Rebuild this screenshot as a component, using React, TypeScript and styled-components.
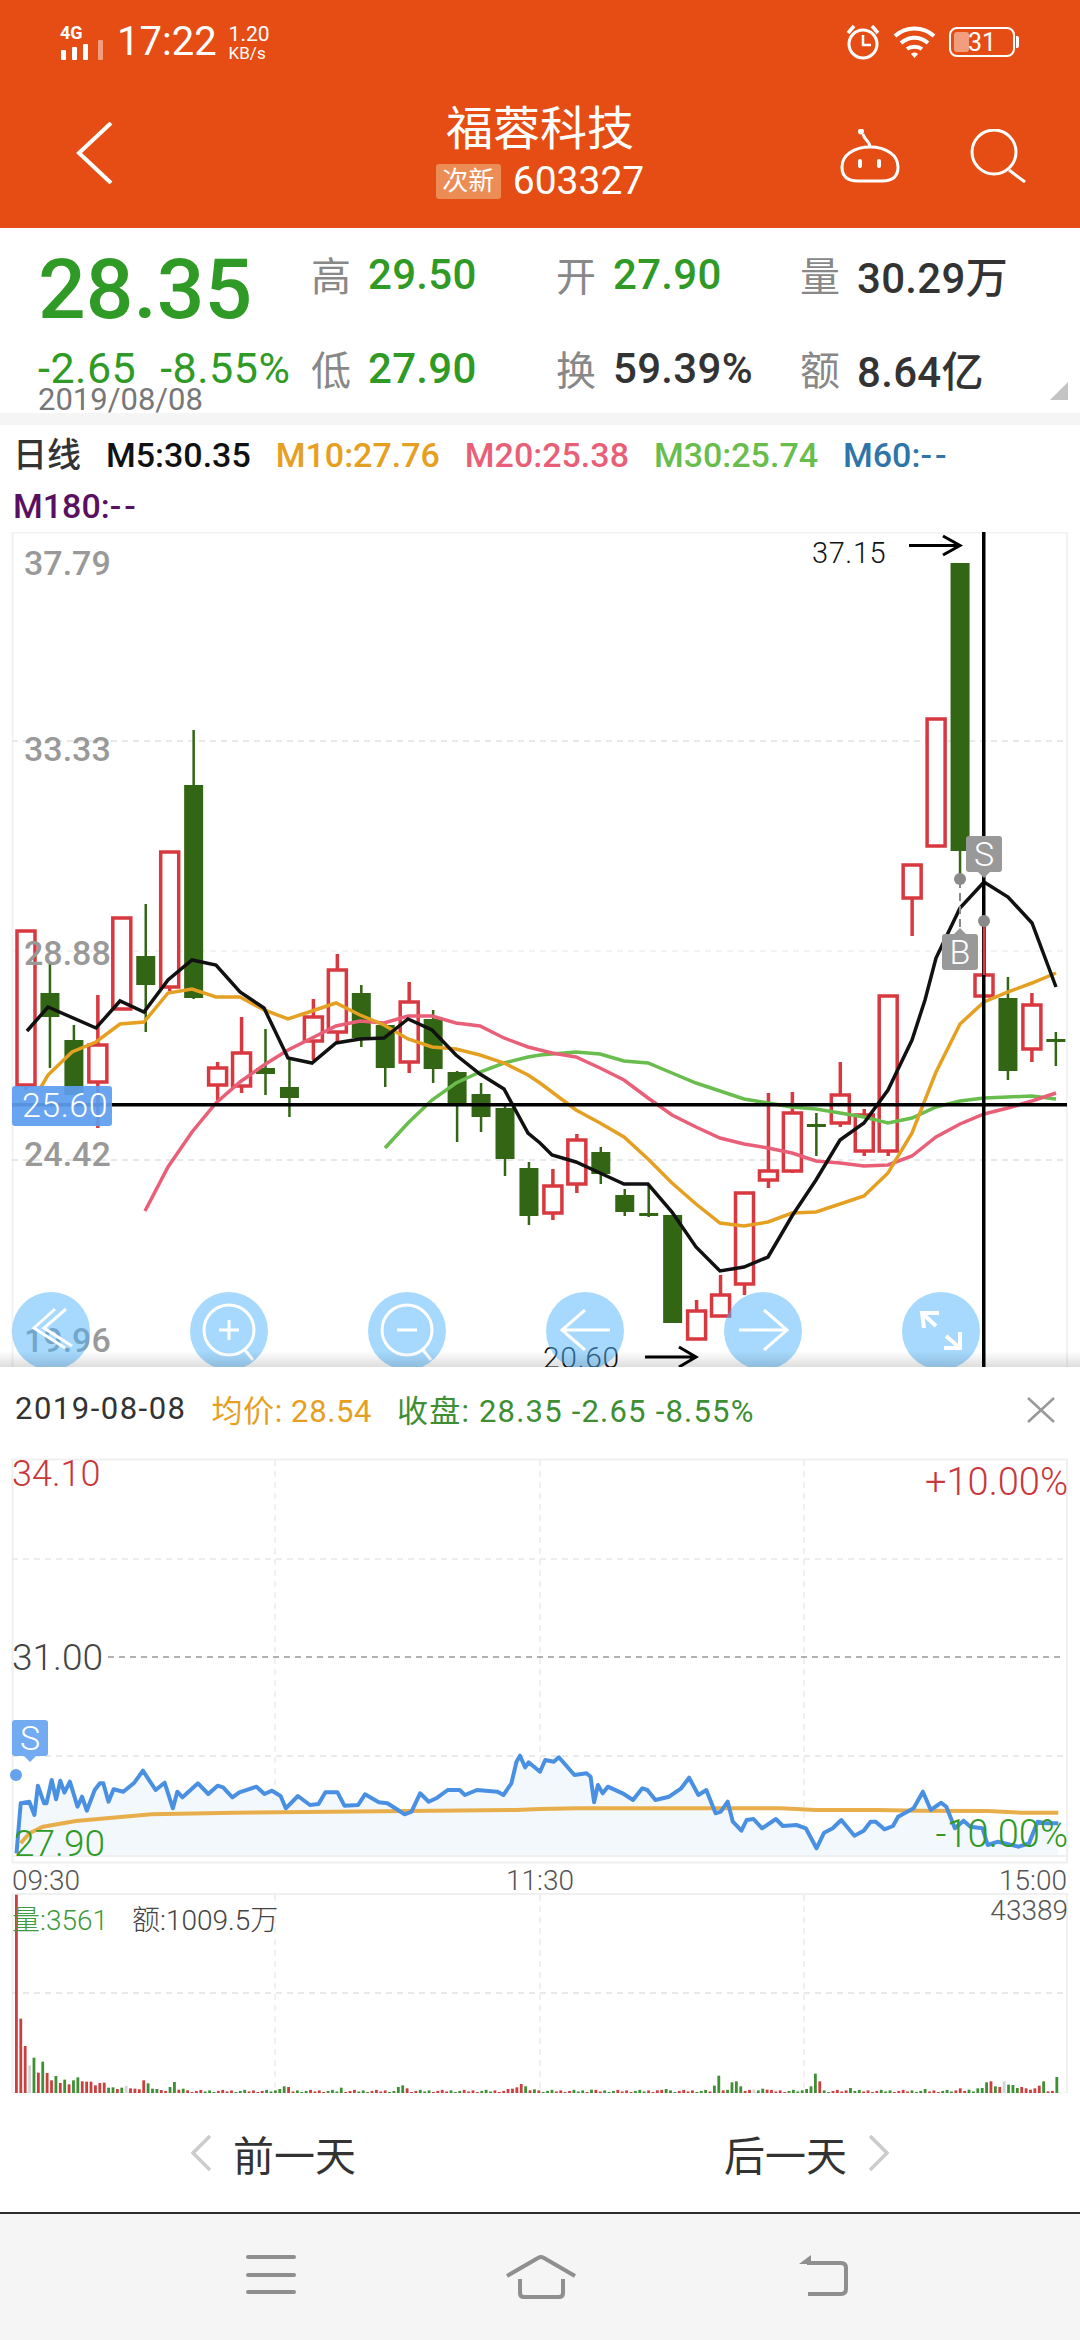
import React from 'react'
import styled, { createGlobalStyle } from 'styled-components'

const GlobalStyle = createGlobalStyle`
    html, body {
        margin: 0;
        padding: 0;
        background: #fff;
        font-family: Roboto, 'Noto Sans CJK SC', sans-serif;
    }
`

const GREEN = '#2f9a25'
const DARK_GREEN = '#336614'
const RED = '#d8383f'
const ORANGE = '#e5a022'
const PINK = '#ea5f78'
const LIME = '#68bd4c'
const BLUE = '#4a90e2'

type Candle = ['r' | 'g', number, number, number, number]

// body top, body bottom, wick top, wick bottom
const candles: Candle[] = [
    ['r', 931, 1085, 931, 1090], ['g', 993, 1017, 962, 1068], ['g', 1040, 1095, 1025, 1095], ['r', 1045, 1082, 995, 1128],
    ['r', 918, 1009, 918, 1009], ['g', 956, 985, 904, 1032], ['r', 852, 987, 852, 991], ['g', 785, 998, 730, 999],
    ['r', 1068, 1085, 1062, 1100], ['r', 1053, 1086, 1017, 1093], ['g', 1068, 1074, 1029, 1095], ['g', 1087, 1098, 1058, 1117],
    ['r', 1017, 1041, 999, 1060], ['r', 970, 1032, 954, 1042], ['g', 993, 1038, 985, 1047], ['g', 1025, 1068, 1023, 1087],
    ['r', 1002, 1062, 982, 1073], ['g', 1019, 1069, 1010, 1083], ['g', 1072, 1103, 1071, 1142], ['g', 1094, 1117, 1083, 1132],
    ['g', 1108, 1159, 1103, 1176], ['g', 1168, 1216, 1162, 1225], ['r', 1186, 1213, 1169, 1220], ['r', 1140, 1184, 1134, 1193],
    ['g', 1152, 1174, 1147, 1184], ['g', 1195, 1212, 1189, 1216], ['g', 1213, 1216, 1186, 1217], ['g', 1215, 1323, 1215, 1323],
    ['r', 1311, 1339, 1300, 1339], ['r', 1295, 1316, 1275, 1316], ['r', 1193, 1284, 1193, 1295], ['r', 1171, 1180, 1093, 1188],
    ['r', 1113, 1171, 1092, 1173], ['g', 1124, 1127, 1113, 1156], ['r', 1095, 1123, 1062, 1127], ['r', 1115, 1151, 1109, 1156],
    ['r', 996, 1151, 996, 1156], ['r', 865, 898, 865, 936], ['r', 719, 846, 719, 846], ['g', 563, 851, 563, 880],
    ['r', 975, 996, 922, 996], ['g', 998, 1071, 977, 1080], ['r', 1005, 1049, 993, 1062], ['g', 1039, 1041, 1032, 1066],
]

const toPoints = (pts: number[][]) => pts.map(p => p.join(',')).join(' ')

const m5 = [[27, 1031], [48, 1007], [96, 1028], [120, 1001], [144, 1012], [168, 980], [192, 960], [216, 965], [240, 992], [264, 1008], [288, 1058], [312, 1063], [336, 1043], [360, 1039], [384, 1038], [408, 1019], [432, 1030], [456, 1055], [480, 1074], [504, 1089], [528, 1133], [540, 1143], [552, 1155], [576, 1162], [600, 1173], [624, 1184], [648, 1184], [672, 1212], [696, 1247], [720, 1271], [744, 1267], [768, 1257], [792, 1216], [816, 1180], [840, 1140], [864, 1123], [888, 1090], [912, 1040], [925, 1000], [936, 958], [960, 908], [984, 882], [1008, 897], [1032, 923], [1056, 987]]
const m10 = [[41, 1087], [48, 1075], [72, 1052], [96, 1042], [120, 1024], [144, 1022], [168, 993], [192, 989], [216, 997], [240, 997], [264, 1010], [288, 1019], [312, 1011], [336, 1003], [360, 1015], [384, 1025], [408, 1039], [432, 1047], [456, 1049], [480, 1055], [504, 1063], [528, 1075], [540, 1083], [576, 1110], [600, 1123], [624, 1137], [648, 1159], [672, 1183], [696, 1204], [720, 1223], [744, 1226], [768, 1222], [792, 1213], [816, 1212], [840, 1204], [864, 1196], [888, 1173], [912, 1133], [936, 1072], [960, 1024], [984, 1002], [1008, 992], [1032, 983], [1056, 973]]
const m20 = [[145, 1211], [168, 1167], [192, 1132], [216, 1103], [240, 1082], [264, 1065], [288, 1050], [312, 1038], [336, 1026], [360, 1021], [384, 1023], [408, 1016], [432, 1016], [456, 1023], [480, 1026], [504, 1038], [528, 1047], [552, 1053], [576, 1057], [600, 1068], [624, 1080], [648, 1098], [672, 1115], [696, 1127], [720, 1138], [744, 1144], [768, 1148], [792, 1153], [816, 1161], [840, 1163], [864, 1166], [888, 1165], [912, 1156], [936, 1137], [960, 1124], [984, 1114], [1008, 1108], [1032, 1101], [1056, 1093]]
const m30 = [[385, 1148], [408, 1123], [432, 1100], [456, 1083], [480, 1072], [504, 1063], [528, 1057], [540, 1055], [576, 1052], [600, 1054], [624, 1061], [648, 1063], [672, 1073], [696, 1083], [720, 1091], [744, 1099], [768, 1103], [792, 1107], [816, 1109], [840, 1113], [864, 1117], [888, 1123], [912, 1118], [936, 1107], [960, 1101], [984, 1098], [1008, 1097], [1032, 1096], [1056, 1099]]

// intraday lines, read off the 2.904x / 3x crops
const fromLeft = (pts: number[][]) => pts.map(([x, y]) => [+(x / 2.904).toFixed(1), +(1640 + y / 3).toFixed(1)])
const fromRight = (pts: number[][]) => pts.map(([x, y]) => [+(540 + x / 2.904).toFixed(1), +(1640 + y / 3).toFixed(1)])

const priceLine = [
    ...fromLeft([[48, 640], [60, 490], [85, 485], [100, 525], [110, 437], [128, 490], [135, 490], [150, 420], [163, 478], [175, 422], [187, 458], [203, 425], [225, 500], [238, 470], [252, 512], [275, 450], [290, 430], [300, 430], [315, 485], [330, 448], [358, 455], [390, 428], [415, 392], [452, 450], [478, 428], [502, 505], [515, 455], [530, 472], [575, 430], [605, 462], [632, 437], [648, 442], [675, 472], [695, 457], [745, 440], [768, 462], [790, 452], [815, 468], [830, 505], [865, 468], [900, 495], [925, 492], [945, 457], [980, 457], [1000, 497], [1040, 495], [1060, 463], [1100, 487], [1125, 490], [1175, 523], [1195, 515], [1220, 460], [1245, 485], [1270, 473], [1300, 450], [1335, 450], [1350, 465], [1385, 450], [1445, 455], [1462, 465], [1485, 430], [1500, 365], [1510, 347], [1525, 382], [1535, 367]]),
    ...fromRight([[0, 395], [15, 360], [40, 365], [55, 352], [100, 405], [135, 400], [147, 410], [157, 487], [168, 435], [182, 460], [197, 440], [240, 460], [270, 480], [297, 445], [312, 450], [335, 480], [375, 470], [410, 445], [433, 413], [460, 465], [483, 450], [510, 520], [525, 515], [545, 485], [560, 545], [585, 572], [600, 540], [620, 537], [645, 565], [685, 537], [705, 558], [745, 555], [772, 565], [803, 625], [825, 578], [850, 565], [875, 540], [913, 587], [940, 572], [960, 545], [975, 545], [1000, 568], [1025, 558], [1040, 530], [1085, 505], [1112, 455], [1135, 510], [1165, 488], [1180, 500], [1205, 565], [1230, 542], [1250, 560], [1285, 565], [1300, 615], [1330, 605], [1390, 620], [1420, 610], [1445, 545], [1470, 550], [1505, 550]]),
]
const avgLine = [
    ...fromLeft([[60, 610], [85, 580], [125, 560], [220, 543], [440, 523], [680, 518], [1500, 510]]),
    ...fromRight([[0, 507], [110, 505], [700, 505], [800, 510], [980, 510], [1100, 512], [1300, 513], [1400, 518], [1505, 518]]),
]
const priceFill = [...priceLine, [priceLine[priceLine.length - 1][0], 1855], [16, 1855]]

type Bar = { h: number; c: string }
const VOL_RED = '#c9403f'
const VOL_GREEN = '#3f8f35'
const VOL_GREY = '#d4d4d4'
const volIndex = (px: number) => Math.round((px - 16.5) / 4.39)

const buildVolumes = () => {
    const bars: Bar[] = []
    for (let i = 0; i < 238; i++) {
        bars.push({ h: 3 + ((i * 7) % 5) * 1.6, c: (i * 13) % 7 < 4 ? VOL_RED : VOL_GREEN })
    }
    const c = { r: VOL_RED, g: VOL_GREEN, n: VOL_GREY }
    const head: [number, keyof typeof c][] = [[595, 'r'], [223, 'r'], [141, 'r'], [83, 'n'], [106, 'g'], [61, 'r'], [94, 'g'], [60, 'r'], [38, 'r'], [51, 'g'], [30, 'r'], [40, 'g'], [26, 'r'], [38, 'g'], [47, 'g'], [35, 'r'], [34, 'r'], [34, 'r'], [23, 'r'], [30, 'r'], [31, 'r'], [16, 'g'], [17, 'g'], [12, 'r'], [16, 'g'], [22, 'n'], [14, 'r'], [13, 'r'], [11, 'r'], [38, 'r'], [29, 'g'], [13, 'g'], [12, 'g'], [9, 'r'], [6, 'r'], [18, 'g'], [33, 'g'], [10, 'r'], [13, 'g'], [8, 'r']]
    head.forEach(([h, k], i) => { bars[i] = { h, c: c[k] } })
    const leftSpikes: [number, number, keyof typeof c][] = [[815, 12, 'g'], [830, 20, 'g'], [842, 18, 'r'], [990, 16, 'g'], [1155, 18, 'g'], [1168, 23, 'g'], [1180, 14, 'r'], [1470, 12, 'r'], [1485, 13, 'r'], [1498, 17, 'r'], [1511, 27, 'r'], [1524, 20, 'g'], [1537, 8, 'r'], [1550, 11, 'g']]
    leftSpikes.forEach(([x, h, k]) => { bars[volIndex(x / 2.904)] = { h, c: c[k] } })
    const rightSpikes: [number, number, keyof typeof c][] = [[155, 10, 'g'], [345, 8, 'r'], [370, 12, 'g'], [508, 22, 'g'], [522, 52, 'g'], [535, 8, 'r'], [560, 32, 'g'], [573, 35, 'g'], [585, 20, 'g'], [623, 10, 'n'], [648, 13, 'g'], [660, 10, 'r'], [760, 8, 'g'], [773, 12, 'g'], [787, 20, 'g'], [800, 58, 'g'], [812, 35, 'r'], [900, 15, 'g'], [1125, 12, 'g'], [1215, 14, 'r'], [1240, 10, 'g'], [1278, 14, 'g'], [1290, 15, 'g'], [1303, 32, 'g'], [1316, 35, 'r'], [1329, 20, 'g'], [1341, 18, 'r'], [1354, 35, 'n'], [1367, 25, 'g'], [1380, 24, 'g'], [1392, 15, 'g'], [1405, 18, 'r'], [1418, 14, 'r'], [1430, 10, 'r'], [1443, 14, 'r'], [1455, 22, 'r'], [1467, 35, 'g'], [1480, 5, 'r'], [1505, 48, 'g']]
    rightSpikes.forEach(([x, h, k]) => { bars[volIndex(540 + x / 2.904)] = { h, c: c[k] } })
    return bars
}
const volumes = buildVolumes()

const Page = styled.div`
    width: 1080px;
    height: 2340px;
    overflow: hidden;
    background: #fff;
    display: flex;
    flex-direction: column;
`
const Header = styled.header`
    height: 228px;
    background: #e54d14;
    color: #fff;
    flex-shrink: 0;
`
const StatusBar = styled.div`
    height: 78px;
    padding: 6px 65px 0 60px;
    box-sizing: border-box;
    display: flex;
    align-items: center;
`
const SignalBox = styled.div`
    display: flex;
    flex-direction: column;
    width: 44px;
    margin-right: 13px;
`
const NetLabel = styled.span`
    font-size: 18px;
    font-weight: 700;
    line-height: 15px;
`
const Clock = styled.span`
    font-size: 40px;
    line-height: 44px;
    margin-right: 12px;
`
const SpeedBox = styled.div`
    display: flex;
    flex-direction: column;
    line-height: 17px;
`
const SpeedValue = styled.span`
    font-size: 21px;
    line-height: 22px;
`
const SpeedUnit = styled.span`
    font-size: 17px;
    line-height: 17px;
`
const StatusRight = styled.div`
    margin-left: auto;
    display: flex;
    align-items: center;
    gap: 13px;
`
const Battery = styled.div`
    position: relative;
    width: 66px;
    height: 30px;
    border: 2px solid #fff;
    border-radius: 8px;
    box-sizing: border-box;
    display: flex;
    align-items: center;
    justify-content: center;
    font-size: 25px;
    &::before {
        content: '';
        position: absolute;
        left: 3px;
        top: 3px;
        bottom: 3px;
        width: 15px;
        border-radius: 3px;
        background: rgba(255, 255, 255, 0.45);
    }
    &::after {
        content: '';
        position: absolute;
        right: -6px;
        top: 7px;
        width: 3px;
        height: 12px;
        border-radius: 0 2px 2px 0;
        background: #fff;
    }
`
const TitleBar = styled.div`
    height: 150px;
    display: grid;
    grid-template-columns: 1fr auto 1fr;
`
const BackCell = styled.div`
    padding: 44px 0 0 76px;
`
const TitleBlock = styled.div`
    padding-top: 26px;
    display: flex;
    flex-direction: column;
    align-items: center;
`
const StockName = styled.div`
    font-size: 47px;
    line-height: 50px;
`
const CodeRow = styled.div`
    margin-top: 9px;
    display: flex;
    align-items: center;
    gap: 12px;
`
const Tag = styled.span`
    width: 65px;
    height: 35px;
    background: #ec8d55;
    border-radius: 3px;
    font-size: 26px;
    line-height: 35px;
    text-align: center;
`
const Code = styled.span`
    font-size: 39px;
    line-height: 36px;
`
const ActionCell = styled.div`
    padding: 51px 54px 0 0;
    display: flex;
    justify-content: flex-end;
    align-items: flex-start;
    gap: 70px;
`

const Quote = styled.section`
    position: relative;
    height: 185px;
    flex-shrink: 0;
    display: flex;
    box-sizing: border-box;
`
const QuoteLeft = styled.div`
    width: 311px;
    padding: 20px 0 0 38px;
    box-sizing: border-box;
    flex-shrink: 0;
`
const Price = styled.div`
    font-size: 84px;
    line-height: 84px;
    font-weight: 500;
    color: ${GREEN};
`
const Change = styled.div`
    margin-top: 16px;
    font-size: 43px;
    line-height: 40px;
    letter-spacing: 0.5px;
    color: ${GREEN};
    display: flex;
    gap: 24px;
    white-space: nowrap;
`
const QuoteDate = styled.div`
    margin-top: -3px;
    font-size: 31px;
    line-height: 30px;
    color: #777;
`
const StatGrid = styled.div`
    padding-top: 23px;
    display: grid;
    grid-template-columns: 245px 244px 220px;
    grid-auto-rows: 46px;
    row-gap: 48px;
`
const Stat = styled.div`
    display: flex;
    align-items: center;
    gap: 17px;
    white-space: nowrap;
`
const StatLabel = styled.span`
    font-size: 40px;
    color: #888;
`
const StatValue = styled.span<{ $color: string }>`
    font-size: 42px;
    font-weight: 500;
    letter-spacing: 0.3px;
    color: ${p => p.$color};
`
const Corner = styled.div`
    position: absolute;
    right: 12px;
    bottom: 13px;
    width: 0;
    height: 0;
    border-style: solid;
    border-width: 0 0 18px 18px;
    border-color: transparent transparent #c4c4c4 transparent;
`
const Strip = styled.div`
    height: 12px;
    background: #f5f5f5;
    flex-shrink: 0;
`
const Legend = styled.div`
    height: 107px;
    box-sizing: border-box;
    padding: 12px 13px 0;
    display: flex;
    flex-wrap: wrap;
    align-content: flex-start;
    column-gap: 25px;
    row-gap: 15px;
    flex-shrink: 0;
`
const LegendItem = styled.span<{ $color: string }>`
    font-size: 34px;
    font-weight: 500;
    line-height: 36px;
    color: ${p => p.$color};
    white-space: nowrap;
`
const LegendDash = styled.span`
    letter-spacing: 3px;
`

const KlinePanel = styled.section`
    position: relative;
    height: 835px;
    flex-shrink: 0;
    overflow: hidden;
`
const ChartSvg = styled.svg`
    display: block;
`
const AxisText = styled.text<{ $color?: string; $size?: number; $weight?: number }>`
    font-family: Roboto, 'Noto Sans CJK SC', sans-serif;
    font-size: ${p => p.$size ?? 34}px;
    font-weight: ${p => p.$weight ?? 500};
    fill: ${p => p.$color ?? '#999'};
`
const ToolRow = styled.div`
    position: absolute;
    left: 12px;
    top: 760px;
    display: flex;
    gap: 100px;
`
const ToolButton = styled.div`
    width: 78px;
    height: 78px;
    border-radius: 50%;
    background: rgba(77, 179, 251, 0.5);
    svg {
        display: block;
    }
`
const BottomShade = styled.div`
    position: absolute;
    left: 0;
    right: 0;
    bottom: 0;
    height: 16px;
    background: linear-gradient(rgba(0, 0, 0, 0), rgba(0, 0, 0, 0.13));
`

const DayPanel = styled.section`
    flex-shrink: 0;
`
const DayHeader = styled.div`
    height: 82px;
    padding: 0 25px 0 15px;
    display: flex;
    align-items: center;
    gap: 25px;
`
const DayText = styled.span<{ $color: string; $spacing: number }>`
    font-size: 31px;
    letter-spacing: ${p => p.$spacing}px;
    color: ${p => p.$color};
    white-space: nowrap;
`
const CloseIcon = styled.svg`
    margin-left: auto;
    margin-top: 4px;
`
const DayNav = styled.div`
    height: 119px;
    padding-left: 191px;
    display: flex;
    align-items: center;
    flex-shrink: 0;
`
const DayLink = styled.div<{ $width: number }>`
    width: ${p => p.$width}px;
    display: flex;
    align-items: center;
    gap: 22px;
    font-size: 41px;
    color: #333;
`
const SystemNav = styled.nav`
    flex: 1;
    background: #f5f5f5;
    border-top: 2px solid #2c2c2c;
    padding: 41px 0 0 246px;
    display: flex;
    align-items: flex-start;
    gap: 210px;
`
const BackKey = styled.svg`
    margin-left: 13px;
`

const Dashed = ({ x1, x2, y1, y2, color = '#e2e2e2' }: { x1: number; x2: number; y1: number; y2: number; color?: string }) => (
    <line x1={x1} x2={x2} y1={y1} y2={y2} stroke={color} strokeWidth={1.5} strokeDasharray="6 5" />
)

const Marker = ({ x, y, label, up, color }: { x: number; y: number; label: string; up?: boolean; color: string }) => (
    <g>
        <rect x={x} y={y} width={36} height={36} rx={3} fill={color} />
        {up
            ? <polygon points={`${x + 12},${y} ${x + 18},${y - 6} ${x + 24},${y}`} fill={color} />
            : <polygon points={`${x + 12},${y + 36} ${x + 18},${y + 42} ${x + 24},${y + 36}`} fill={color} />}
        <AxisText x={x + 18} y={y + 30} textAnchor="middle" $size={34} $weight={300} $color="#fff">{label}</AxisText>
    </g>
)

const KlineChart = () => (
    <ChartSvg width={1080} height={835} viewBox="0 532 1080 835">
        <rect x={12.5} y={532.5} width={1054.5} height={840} fill="none" stroke="#f2f2f2" strokeWidth={2} />
        <Dashed x1={12} x2={1067} y1={741} y2={741} />
        <Dashed x1={12} x2={1067} y1={951} y2={951} color="#efefef" />
        <Dashed x1={12} x2={1067} y1={1160} y2={1160} />

        {candles.map(([c, top, bottom, wickTop, wickBottom], i) => {
            const x = 26 + 23.95 * i
            if (c === 'g') {
                return (
                    <g key={i} fill={DARK_GREEN}>
                        <rect x={x - 1.25} y={wickTop} width={2.5} height={wickBottom - wickTop} />
                        <rect x={x - 9.5} y={top} width={19} height={Math.max(bottom - top, 3)} />
                    </g>
                )
            }
            return (
                <g key={i} stroke={RED} strokeWidth={3.5}>
                    <line x1={x} x2={x} y1={wickTop} y2={top} />
                    <line x1={x} x2={x} y1={bottom} y2={wickBottom} />
                    <rect x={x - 9} y={top} width={18} height={bottom - top} fill="#fff" />
                </g>
            )
        })}

        <polyline points={toPoints(m30)} fill="none" stroke={LIME} strokeWidth={3.5} />
        <polyline points={toPoints(m20)} fill="none" stroke={PINK} strokeWidth={3.5} />
        <polyline points={toPoints(m10)} fill="none" stroke={ORANGE} strokeWidth={3.5} />
        <polyline points={toPoints(m5)} fill="none" stroke="#111" strokeWidth={3.5} />

        <rect x={12} y={1103} width={1055} height={3.5} fill="#000" />
        <rect x={982} y={532} width={3.5} height={835} fill="#000" />

        <AxisText x={24} y={575}>37.79</AxisText>
        <AxisText x={24} y={761}>33.33</AxisText>
        <AxisText x={24} y={965}>28.88</AxisText>
        <AxisText x={24} y={1166}>24.42</AxisText>
        <AxisText x={24} y={1352}>19.96</AxisText>

        <rect x={12} y={1086} width={100} height={40} rx={3} fill="#5c9dee" fillOpacity={0.93} />
        <AxisText x={22} y={1117} $color="#fff" $weight={300} letterSpacing={0.5}>25.60</AxisText>

        <AxisText x={812} y={563} $color="#111" $size={29} $weight={300} letterSpacing={0.6}>37.15</AxisText>
        <path d="M909 545.5H960M943 536L960 545.5L943 555" fill="none" stroke="#000" strokeWidth={3} />
        <AxisText x={543} y={1368} $color="#111" $size={30} $weight={300} letterSpacing={0.6}>20.60</AxisText>
        <path d="M645 1357H696M679 1347L696 1357L679 1367" fill="none" stroke="#000" strokeWidth={3} />

        <line x1={960} x2={960} y1={880} y2={930} stroke="#888" strokeWidth={2} strokeDasharray="8 5" />
        <line x1={984} x2={984} y1={921} y2={975} stroke={RED} strokeWidth={2.5} />
        <circle cx={960} cy={879} r={6} fill="#8a8a8a" />
        <circle cx={984} cy={921} r={6} fill="#8a8a8a" />
        <Marker x={966} y={836} label="S" color="#999" />
        <Marker x={942} y={934} label="B" up color="#999" />
    </ChartSvg>
)

const ToolIcon = ({ children }: { children: React.ReactNode }) => (
    <svg width={78} height={78} viewBox="0 0 78 78" fill="none" stroke="#fff" strokeWidth={3}>{children}</svg>
)

const Tools = () => (
    <ToolRow>
        <ToolButton>
            <ToolIcon>
                <path d="M43 17L22 36L53 56" />
                <path d="M54 17L32 36L60 54" />
            </ToolIcon>
        </ToolButton>
        <ToolButton>
            <ToolIcon>
                <circle cx={39} cy={38} r={25} />
                <path d="M29 38H49M39 28V48M55 58L63 68" />
            </ToolIcon>
        </ToolButton>
        <ToolButton>
            <ToolIcon>
                <circle cx={39} cy={38} r={25} />
                <path d="M29 38H49M55 58L63 68" />
            </ToolIcon>
        </ToolButton>
        <ToolButton>
            <ToolIcon>
                <path d="M64 38H16M39 18L16 38L39 58" />
            </ToolIcon>
        </ToolButton>
        <ToolButton>
            <ToolIcon>
                <path d="M15 38H63M40 18L63 38L40 58" />
            </ToolIcon>
        </ToolButton>
        <ToolButton>
            <ToolIcon>
                <path d="M37 21H20L22 36M20 21L34 34M44 44L58 56M42 56H58V40" strokeWidth={4} />
            </ToolIcon>
        </ToolButton>
    </ToolRow>
)

const IntradayChart = () => (
    <ChartSvg width={1080} height={644} viewBox="0 1449 1080 644">
        <rect x={12.5} y={1459.5} width={1054.5} height={403} fill="none" stroke="#efefef" strokeWidth={2} />
        <rect x={12} y={1855} width={1055} height={2} fill="#f0f0f0" />
        {[275, 540, 804].map(x => <Dashed key={x} x1={x} x2={x} y1={1460} y2={1855} color="#ececec" />)}
        <Dashed x1={12} x2={1067} y1={1559} y2={1559} color="#e8e8e8" />
        <Dashed x1={108} x2={1060} y1={1657} y2={1657} color="#999" />
        <Dashed x1={12} x2={1067} y1={1756} y2={1756} color="#e4e4e4" />

        <polygon points={toPoints(priceFill)} fill="#f3f8fd" />
        <polyline points={toPoints(avgLine)} fill="none" stroke="#e8ae4b" strokeWidth={4} />
        <polyline points={toPoints(priceLine)} fill="none" stroke={BLUE} strokeWidth={4} strokeLinejoin="round" />

        <AxisText x={12} y={1486} $size={36} $weight={300} $color="#c8373c">34.10</AxisText>
        <AxisText x={1068} y={1495} $size={38} $weight={300} $color="#c8373c" textAnchor="end">+10.00%</AxisText>
        <AxisText x={12} y={1670} $size={37} $weight={300} $color="#444">31.00</AxisText>
        <AxisText x={14} y={1856} $size={37} $weight={300} $color={GREEN}>27.90</AxisText>
        <AxisText x={1068} y={1847} $size={38} $weight={300} $color={GREEN} textAnchor="end">-10.00%</AxisText>

        <Marker x={12} y={1720} label="S" color="#72abf2" />
        <circle cx={16} cy={1775} r={6} fill="#64a2ee" />

        <AxisText x={12} y={1890} $size={28} $weight={300} $color="#555">09:30</AxisText>
        <AxisText x={540} y={1890} $size={28} $weight={300} $color="#555" textAnchor="middle">11:30</AxisText>
        <AxisText x={1067} y={1890} $size={28} $weight={300} $color="#555" textAnchor="end">15:00</AxisText>

        <rect x={12.5} y={1894} width={1054.5} height={199} fill="none" stroke="#f0f0f0" strokeWidth={2} />
        {[275, 540, 804].map(x => <Dashed key={x} x1={x} x2={x} y1={1895} y2={2093} color="#ececec" />)}
        <Dashed x1={12} x2={1067} y1={1993} y2={1993} color="#e2e2e2" />

        {volumes.map((b, i) => (
            <rect key={i} x={15 + 4.39 * i} y={2093 - b.h / 3} width={2.8} height={b.h / 3} fill={b.c} />
        ))}

        <AxisText x={12} y={1930} $size={28} $weight={300} $color="#3e9a3a">量:3561</AxisText>
        <AxisText x={132} y={1930} $size={28} $weight={300} $color="#444">额:1009.5万</AxisText>
        <AxisText x={1068} y={1920} $size={28} $weight={300} $color="#555" textAnchor="end">43389</AxisText>
    </ChartSvg>
)

const App = () => {
    return (
        <Page>
            <GlobalStyle />
            <Header>
                <StatusBar>
                    <SignalBox>
                        <NetLabel>4G</NetLabel>
                        <svg width={44} height={20} viewBox="0 0 44 20" fill="#fff">
                            <rect x={1} y={10} width={5} height={10} rx={1} />
                            <rect x={12} y={7} width={5} height={13} rx={1} />
                            <rect x={23} y={4} width={5} height={16} rx={1} />
                            <rect x={38} y={0} width={5} height={20} rx={1} fillOpacity={0.45} />
                        </svg>
                    </SignalBox>
                    <Clock>17:22</Clock>
                    <SpeedBox>
                        <SpeedValue>1.20</SpeedValue>
                        <SpeedUnit>KB/s</SpeedUnit>
                    </SpeedBox>
                    <StatusRight>
                        <svg width={34} height={36} viewBox="0 0 34 36" fill="none" stroke="#fff" strokeWidth={3}>
                            <circle cx={17} cy={20} r={14} />
                            <path d="M17 11V21H25" strokeWidth={2.5} />
                            <path d="M2 9L8 2M32 9L26 2" strokeWidth={3.5} />
                        </svg>
                        <svg width={43} height={33} viewBox="0 0 43 33" fill="none" stroke="#fff" strokeWidth={4}>
                            <path d="M2 10C13 0 30 0 41 10" />
                            <path d="M8 17C16 10 27 10 35 17" />
                            <path d="M14 23C18 20 25 20 29 23" />
                            <path d="M18 28L21.5 32L25 28C23 26 20 26 18 28Z" fill="#fff" stroke="none" />
                        </svg>
                        <Battery>31</Battery>
                    </StatusRight>
                </StatusBar>
                <TitleBar>
                    <BackCell>
                        <svg width={38} height={62} viewBox="0 0 38 62" fill="none" stroke="#fff" strokeWidth={4}>
                            <path d="M35 1L3 31L35 61" />
                        </svg>
                    </BackCell>
                    <TitleBlock>
                        <StockName>福蓉科技</StockName>
                        <CodeRow>
                            <Tag>次新</Tag>
                            <Code>603327</Code>
                        </CodeRow>
                    </TitleBlock>
                    <ActionCell>
                        <svg width={60} height={54} viewBox="0 0 60 54" fill="none" stroke="#fff" strokeWidth={3}>
                            <path d="M2 38C2 26 14 18 30 18C46 18 58 26 58 38C58 48 52 52 42 52H18C8 52 2 48 2 38Z" />
                            <path d="M30 18C30 12 24 11 23 5" />
                            <circle cx={21} cy={2.5} r={1.5} fill="#fff" />
                            <rect x={18} y={30} width={4} height={9} rx={2} fill="#fff" stroke="none" />
                            <rect x={37} y={30} width={4} height={9} rx={2} fill="#fff" stroke="none" />
                        </svg>
                        <svg width={56} height={54} viewBox="0 0 56 54" fill="none" stroke="#fff" strokeWidth={3}>
                            <circle cx={24} cy={23} r={22} />
                            <path d="M39 41L55 53" />
                        </svg>
                    </ActionCell>
                </TitleBar>
            </Header>

            <Quote>
                <QuoteLeft>
                    <Price>28.35</Price>
                    <Change>
                        <span>-2.65</span>
                        <span>-8.55%</span>
                    </Change>
                    <QuoteDate>2019/08/08</QuoteDate>
                </QuoteLeft>
                <StatGrid>
                    <Stat><StatLabel>高</StatLabel><StatValue $color={GREEN}>29.50</StatValue></Stat>
                    <Stat><StatLabel>开</StatLabel><StatValue $color={GREEN}>27.90</StatValue></Stat>
                    <Stat><StatLabel>量</StatLabel><StatValue $color="#333">30.29万</StatValue></Stat>
                    <Stat><StatLabel>低</StatLabel><StatValue $color={GREEN}>27.90</StatValue></Stat>
                    <Stat><StatLabel>换</StatLabel><StatValue $color="#333">59.39%</StatValue></Stat>
                    <Stat><StatLabel>额</StatLabel><StatValue $color="#333">8.64亿</StatValue></Stat>
                </StatGrid>
                <Corner />
            </Quote>
            <Strip />

            <Legend>
                <LegendItem $color="#333">日线</LegendItem>
                <LegendItem $color="#111">M5:30.35</LegendItem>
                <LegendItem $color={ORANGE}>M10:27.76</LegendItem>
                <LegendItem $color={PINK}>M20:25.38</LegendItem>
                <LegendItem $color={LIME}>M30:25.74</LegendItem>
                <LegendItem $color="#2e75a8">M60:<LegendDash>--</LegendDash></LegendItem>
                <LegendItem $color="#5a1060">M180:<LegendDash>--</LegendDash></LegendItem>
            </Legend>

            <KlinePanel>
                <KlineChart />
                <Tools />
                <BottomShade />
            </KlinePanel>

            <DayPanel>
                <DayHeader>
                    <DayText $color="#333" $spacing={1.5}>2019-08-08</DayText>
                    <DayText $color={ORANGE} $spacing={0.6}>均价: 28.54</DayText>
                    <DayText $color="#3e8e34" $spacing={1.2}>收盘: 28.35 -2.65 -8.55%</DayText>
                    <CloseIcon width={28} height={26} viewBox="0 0 28 26" fill="none" stroke="#999" strokeWidth={2.5}>
                        <path d="M1 1L27 25M27 1L1 25" />
                    </CloseIcon>
                </DayHeader>
                <IntradayChart />
            </DayPanel>

            <DayNav>
                <DayLink $width={533}>
                    <svg width={20} height={36} viewBox="0 0 20 36" fill="none" stroke="#ccc" strokeWidth={3.5}>
                        <path d="M19 1L2 18L19 35" />
                    </svg>
                    前一天
                </DayLink>
                <DayLink $width={170}>
                    后一天
                    <svg width={20} height={36} viewBox="0 0 20 36" fill="none" stroke="#ccc" strokeWidth={3.5}>
                        <path d="M1 1L18 18L1 35" />
                    </svg>
                </DayLink>
            </DayNav>

            <SystemNav>
                <svg width={50} height={40} viewBox="0 0 50 40" fill="#8f8f8f">
                    <rect y={0} width={50} height={4} rx={2} />
                    <rect y={18} width={50} height={4} rx={2} />
                    <rect y={35} width={50} height={4} rx={2} />
                </svg>
                <svg width={70} height={44} viewBox="0 0 70 44" fill="none" stroke="#8f8f8f" strokeWidth={4}>
                    <path d="M1 21L32 3Q35 1 38 3L69 21" />
                    <path d="M14 24V38Q14 42 18 42H53Q57 42 57 38V24" />
                </svg>
                <BackKey width={50} height={42} viewBox="0 0 50 42" fill="none" stroke="#8f8f8f" strokeWidth={4}>
                    <path d="M8 8H42Q47 8 47 13V34Q47 39 42 39H9" />
                    <polygon points="0,9 12,0 12,9" fill="#8f8f8f" stroke="none" />
                </BackKey>
            </SystemNav>
        </Page>
    )
}

export default App
